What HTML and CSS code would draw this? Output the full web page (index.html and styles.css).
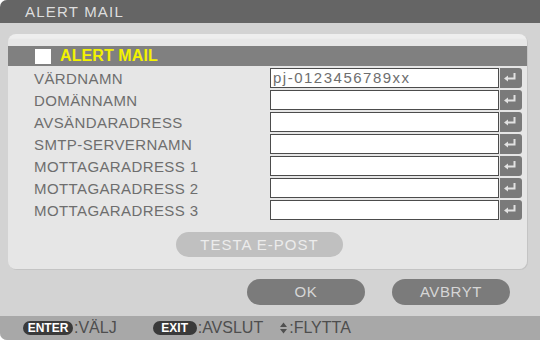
FILE: index.html
```html
<!DOCTYPE html>
<html>
<head>
<meta charset="utf-8">
<link rel="stylesheet" href="styles.css">
</head>
<body>
<div class="window">
  <div class="titlebar">ALERT MAIL</div>
  <div class="content">
    <div class="panel">
      <div class="band"><span class="check"></span><span class="band-label">ALERT MAIL</span></div>
      <div class="rows">
        <div class="row"><span class="label">VÄRDNAMN</span><span class="field">pj-0123456789xx</span><span class="enter"><svg width="22" height="20" viewBox="0 0 22 20"><path d="M14.5 5v5.5H7" fill="none" stroke="#e2e2e2" stroke-width="2"/><path d="M4 10.5l4-3v6z" fill="#e2e2e2"/></svg></span></div>
        <div class="row"><span class="label">DOMÄNNAMN</span><span class="field"></span><span class="enter"><svg width="22" height="20" viewBox="0 0 22 20"><path d="M14.5 5v5.5H7" fill="none" stroke="#e2e2e2" stroke-width="2"/><path d="M4 10.5l4-3v6z" fill="#e2e2e2"/></svg></span></div>
        <div class="row"><span class="label">AVSÄNDARADRESS</span><span class="field"></span><span class="enter"><svg width="22" height="20" viewBox="0 0 22 20"><path d="M14.5 5v5.5H7" fill="none" stroke="#e2e2e2" stroke-width="2"/><path d="M4 10.5l4-3v6z" fill="#e2e2e2"/></svg></span></div>
        <div class="row"><span class="label">SMTP-SERVERNAMN</span><span class="field"></span><span class="enter"><svg width="22" height="20" viewBox="0 0 22 20"><path d="M14.5 5v5.5H7" fill="none" stroke="#e2e2e2" stroke-width="2"/><path d="M4 10.5l4-3v6z" fill="#e2e2e2"/></svg></span></div>
        <div class="row"><span class="label">MOTTAGARADRESS 1</span><span class="field"></span><span class="enter"><svg width="22" height="20" viewBox="0 0 22 20"><path d="M14.5 5v5.5H7" fill="none" stroke="#e2e2e2" stroke-width="2"/><path d="M4 10.5l4-3v6z" fill="#e2e2e2"/></svg></span></div>
        <div class="row"><span class="label">MOTTAGARADRESS 2</span><span class="field"></span><span class="enter"><svg width="22" height="20" viewBox="0 0 22 20"><path d="M14.5 5v5.5H7" fill="none" stroke="#e2e2e2" stroke-width="2"/><path d="M4 10.5l4-3v6z" fill="#e2e2e2"/></svg></span></div>
        <div class="row"><span class="label">MOTTAGARADRESS 3</span><span class="field"></span><span class="enter"><svg width="22" height="20" viewBox="0 0 22 20"><path d="M14.5 5v5.5H7" fill="none" stroke="#e2e2e2" stroke-width="2"/><path d="M4 10.5l4-3v6z" fill="#e2e2e2"/></svg></span></div>
      </div>
      <div class="test-btn">TESTA E-POST</div>
    </div>
    <div class="actions">
      <div class="btn ok">OK</div>
      <div class="btn cancel">AVBRYT</div>
    </div>
  </div>
  <div class="footer">
    <span class="pill enter-pill">ENTER</span><span class="ftext">:VÄLJ</span>
    <span class="pill exit-pill">EXIT</span><span class="ftext">:AVSLUT</span>
    <span class="updown"><svg width="9" height="12" viewBox="0 0 9 12"><path d="M4.5 0.5L8 5H1z M4.5 11.5L8 7H1z" fill="#505050"/></svg></span><span class="ftext">:FLYTTA</span>
  </div>
</div>
</body>
</html>
```
FILE: styles.css
```css
html, body {
  margin: 0;
  padding: 0;
  background: #ffffff;
}
body {
  width: 540px;
  height: 340px;
  overflow: hidden;
  font-family: "Liberation Sans", Arial, sans-serif;
}
.window {
  width: 540px;
  height: 340px;
  display: flex;
  flex-direction: column;
  border-radius: 7px 0 0 7px;
  overflow: hidden;
  background: #d3d3d3;
}
.titlebar {
  height: 23px;
  flex: none;
  background: #656565;
  color: #dedede;
  font-size: 15px;
  letter-spacing: 1.2px;
  line-height: 23px;
  padding-left: 25px;
}
.content {
  flex: 1;
  padding: 11px 13px 0 8px;
  display: flex;
  flex-direction: column;
}
.panel {
  height: 235px;
  box-sizing: border-box;
  background: linear-gradient(#eeeeee 0, #eeeeee 4px, #e6e6e6 6px, #e6e6e6 100%);
  border-radius: 8px;
  padding-top: 12px;
  display: flex;
  flex-direction: column;
  box-shadow: 1px 1px 0 #c4c4c4;
}
.band {
  height: 20px;
  background: #808080;
  display: flex;
  align-items: center;
}
.check {
  width: 16px;
  height: 15px;
  background: #ffffff;
  margin-left: 27px;
}
.band-label {
  margin-left: 9px;
  color: #f2f200;
  font-weight: bold;
  font-size: 16px;
  letter-spacing: 0.1px;
}
.rows {
  margin-top: 2px;
  display: flex;
  flex-direction: column;
  gap: 2px;
}
.row {
  height: 20px;
  display: flex;
  align-items: center;
}
.label {
  width: 236px;
  padding-left: 26px;
  color: #6e6e6e;
  font-size: 15px;
  letter-spacing: 0.4px;
}
.field {
  width: 229px;
  height: 20px;
  box-sizing: border-box;
  background: #ffffff;
  border: 1px solid #4c4c4c;
  color: #6e6e6e;
  font-size: 15px;
  letter-spacing: 1.5px;
  line-height: 18px;
  padding-left: 2px;
}
.enter {
  width: 22px;
  height: 20px;
  margin-left: 1px;
  background: #7a7a7a;
  border-radius: 0 3px 3px 0;
  display: flex;
}
.test-btn {
  margin-top: 12px;
  margin-left: 168px;
  width: 167px;
  height: 25px;
  border-radius: 13px;
  background: #c0c0c0;
  color: #ececec;
  font-size: 15px;
  letter-spacing: 1px;
  line-height: 25px;
  text-align: center;
}
.actions {
  margin-top: 10px;
  display: flex;
  padding-left: 239px;
  gap: 27px;
}
.btn {
  width: 118px;
  height: 26px;
  border-radius: 13px;
  background: #7b7b7b;
  color: #d6d6d6;
  font-size: 15px;
  letter-spacing: 0.6px;
  line-height: 26px;
  text-align: center;
}
.footer {
  height: 24px;
  flex: none;
  background: #a8a8a8;
  display: flex;
  align-items: center;
  padding-left: 23px;
  color: #4e4e4e;
  font-size: 16px;
  letter-spacing: 0;
}
.pill {
  height: 14px;
  border-radius: 7px;
  background: #3a3a3a;
  color: #ffffff;
  font-weight: bold;
  font-size: 12px;
  line-height: 14px;
  text-align: center;
  letter-spacing: 0;
}
.enter-pill {
  width: 50px;
}
.exit-pill {
  width: 44px;
  margin-left: 36px;
}
.ftext {
  margin-left: 1px;
}
.updown {
  margin-left: 16px;
  display: flex;
}
```
